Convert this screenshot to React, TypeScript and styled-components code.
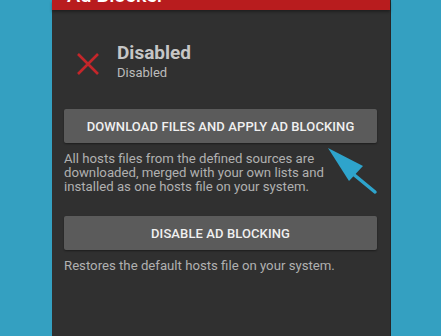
import { createGlobalStyle, styled } from "styled-components";

const GlobalStyle = createGlobalStyle`
  body {
    margin: 0;
    background: #34a0c1;
    font-family: Roboto, "Liberation Sans", sans-serif;
  }
`;

const App = () => {
  return (
    <Screen>
      <GlobalStyle />
      <Phone>
        <Toolbar>
          <ToolbarTitle>Ad Blocker</ToolbarTitle>
        </Toolbar>
        <Content>
          <Status>
            <CrossIcon viewBox="0 0 22 22">
              <path d="M1 1 L21 21 M21 1 L1 21" stroke="#c4262a" strokeWidth="2.6" />
            </CrossIcon>
            <StatusText>
              <StatusTitle>Disabled</StatusTitle>
              <StatusSub>Disabled</StatusSub>
            </StatusText>
          </Status>
          <Action>
            <Button>DOWNLOAD FILES AND APPLY AD BLOCKING</Button>
            <Hint>
              All hosts files from the defined sources are downloaded, merged with your own lists and
              installed as one hosts file on your system.
            </Hint>
          </Action>
          <Action>
            <Button>DISABLE AD BLOCKING</Button>
            <Hint>Restores the default hosts file on your system.</Hint>
          </Action>
        </Content>
        <Arrow viewBox="0 0 60 50">
          <path d="M48 45 L14 17" stroke="#2ea4cc" strokeWidth="3.5" strokeLinecap="round" />
          <path d="M1 1 L36 19 L22 34 Z" fill="#2ea4cc" />
        </Arrow>
      </Phone>
    </Screen>
  );
};

export default App;

const Screen = styled.div`
  width: 441px;
  height: 336px;
  overflow: hidden;
`;

const Phone = styled.div`
  position: relative;
  margin-left: 52px;
  width: 339px;
  height: 336px;
  background: #303030;
  border-right: 1px solid #262626;
  box-sizing: border-box;
`;

const Toolbar = styled.div`
  height: 10px;
  background: #b81c1e;
  display: flex;
  align-items: flex-end;
  padding: 0 0 5px 15px;
  box-sizing: border-box;
  overflow: hidden;
  box-shadow: 0 2px 3px rgba(0, 0, 0, 0.35);
`;

const ToolbarTitle = styled.div`
  color: #ffffff;
  font-size: 20px;
  line-height: 20px;
  font-weight: 500;
  flex-shrink: 0;
`;

const Content = styled.div`
  padding: 32px 13px 0 12px;
  display: flex;
  flex-direction: column;
`;

const Status = styled.div`
  display: flex;
  align-items: center;
  gap: 18px;
  padding-left: 13px;
  height: 40px;
  margin-bottom: 27px;
`;

const CrossIcon = styled.svg`
  width: 22px;
  height: 22px;
  flex-shrink: 0;
  margin-top: 3px;
`;

const StatusText = styled.div`
  display: flex;
  flex-direction: column;
`;

const StatusTitle = styled.div`
  color: #c6c6c6;
  font-size: 19px;
  font-weight: 700;
  line-height: 22px;
`;

const StatusSub = styled.div`
  color: #bcbcbc;
  font-size: 13px;
  line-height: 18px;
`;

const Action = styled.div`
  display: flex;
  flex-direction: column;
  margin-bottom: 22px;
`;

const Button = styled.div`
  height: 34px;
  background: #5b5b5b;
  border-radius: 2px;
  box-shadow: 0 1px 2px rgba(0, 0, 0, 0.4);
  color: #f0f0f0;
  font-size: 13px;
  font-weight: 500;
  display: flex;
  align-items: center;
  justify-content: center;
  letter-spacing: 0.1px;
`;

const Hint = styled.div`
  margin-top: 9px;
  padding-right: 40px;
  color: #b0b0b0;
  font-size: 13.2px;
  line-height: 14px;
`;

const Arrow = styled.svg`
  position: absolute;
  left: 275px;
  top: 147px;
  width: 60px;
  height: 50px;
`;
